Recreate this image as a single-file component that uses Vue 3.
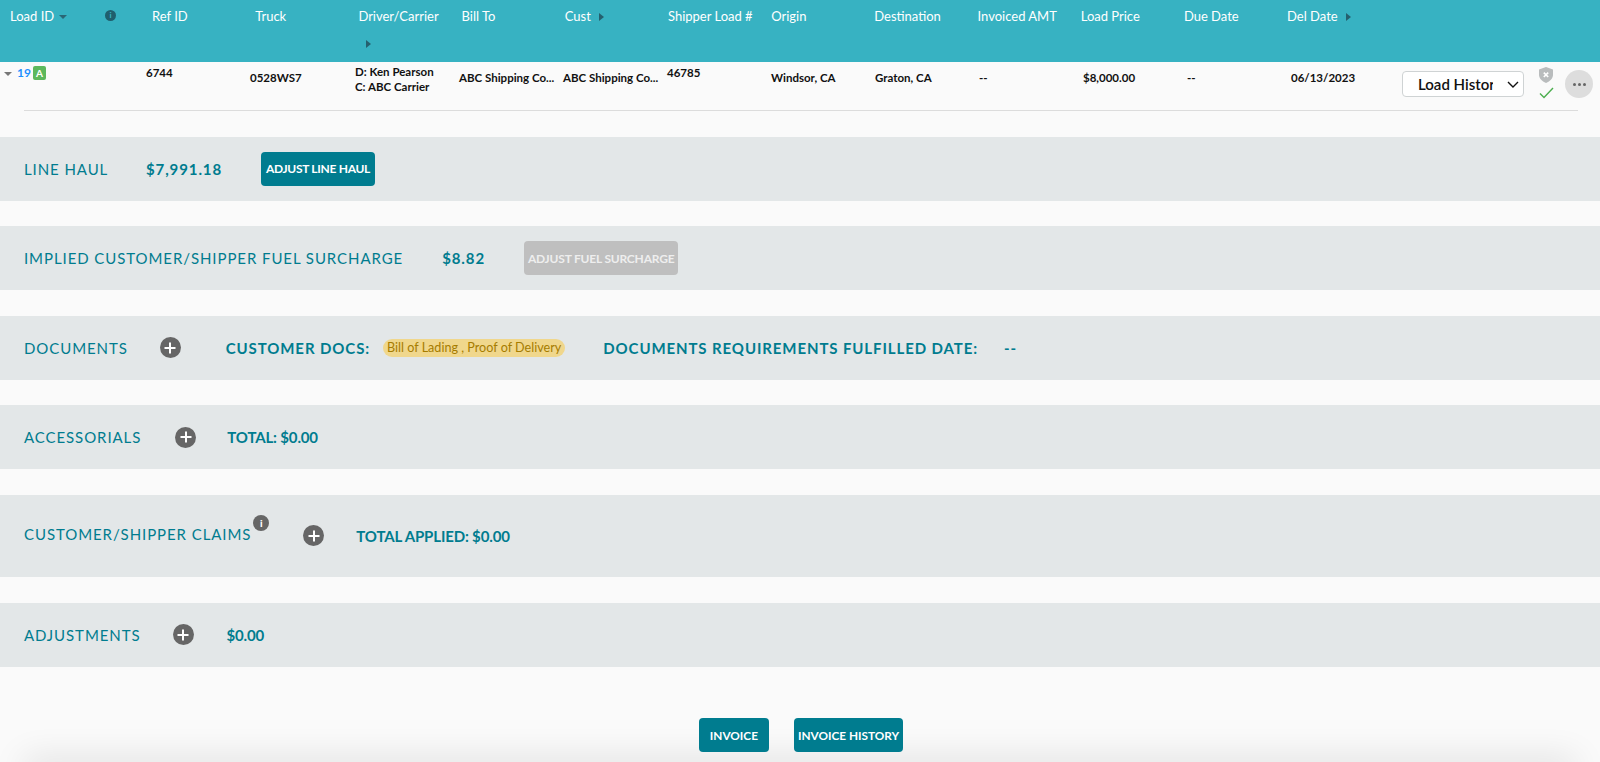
<script setup>
const columns = [
  { label: 'Ref ID' },
  { label: 'Truck' },
  { label: 'Driver/Carrier', arrowBelow: true },
  { label: 'Bill To' },
  { label: 'Cust', arrow: true },
  { label: 'Shipper Load #' },
  { label: 'Origin' },
  { label: 'Destination' },
  { label: 'Invoiced AMT' },
  { label: 'Load Price' },
  { label: 'Due Date' },
  { label: 'Del Date', arrow: true }
]

const plainCells = ['Windsor, CA', 'Graton, CA', '--', '$8,000.00', '--', '06/13/2023']
</script>

<template>
  <div class="page">
    <div class="table-head">
      <div class="th th-load">Load ID <span class="caret-down"></span></div>
      <div class="th th-info"><span class="head-info">i</span></div>
      <div v-for="col in columns" :key="col.label" class="th">
        <span>{{ col.label }}</span>
        <span v-if="col.arrow" class="caret-right"></span>
        <div v-if="col.arrowBelow" class="below"><span class="caret-right"></span></div>
      </div>
    </div>

    <div class="table-row">
      <div class="td td-load">
        <span class="caret-row"></span>
        <a class="load-link">19</a>
        <span class="badge">A</span>
      </div>
      <div class="td td-top">6744</div>
      <div class="td td-truck">0528WS7</div>
      <div class="td td-driver">
        <div>D: Ken Pearson</div>
        <div>C: ABC Carrier</div>
      </div>
      <div class="td">ABC Shipping Co...</div>
      <div class="td">ABC Shipping Co...</div>
      <div class="td td-top">46785</div>
      <div v-for="(cell, i) in plainCells" :key="i" class="td">{{ cell }}</div>
      <div class="select-wrap">
        <select class="history">
          <option>Load History</option>
        </select>
        <svg class="chevron" width="12" height="7" viewBox="0 0 12 7">
          <path d="M1 1l5 5 5-5" fill="none" stroke="#111" stroke-width="1.4" />
        </svg>
      </div>
      <div class="status">
        <svg width="14" height="16" viewBox="0 0 14 16">
          <path d="M7 0l7 2.400v5.400c0 3.600-2.800 6.600-7 8.200-4.200-1.600-7-4.600-7-8.200V2.400z" fill="#b9bcbd" />
          <path d="M4.800 5.600l4.400 4.400M9.200 5.600l-4.400 4.400" stroke="#fff" stroke-width="1.600" />
        </svg>
        <svg width="15" height="12" viewBox="0 0 15 12">
          <path d="M1 6.500l4 4L14 1" fill="none" stroke="#4cae4f" stroke-width="1.400" />
        </svg>
      </div>
      <div class="more"><i></i><i></i><i></i></div>
    </div>
    <div class="divider"></div>

    <section class="band band-first">
      <span class="title title-linehaul">LINE HAUL</span>
      <span class="amount amount-linehaul">$7,991.18</span>
      <button class="btn btn-adjust">ADJUST LINE HAUL</button>
    </section>

    <section class="band">
      <span class="title">IMPLIED CUSTOMER/SHIPPER FUEL SURCHARGE</span>
      <span class="amount amount-fuel">$8.82</span>
      <button class="btn btn-adjust btn-disabled">ADJUST FUEL SURCHARGE</button>
    </section>

    <section class="band">
      <span class="title">DOCUMENTS</span>
      <span class="plus plus-docs"></span>
      <span class="strong strong-docs">CUSTOMER DOCS:</span>
      <span class="pill">Bill of Lading , Proof of Delivery</span>
      <span class="strong strong-req">DOCUMENTS REQUIREMENTS FULFILLED DATE:</span>
      <span class="strong strong-dash">--</span>
    </section>

    <section class="band">
      <span class="title">ACCESSORIALS</span>
      <span class="plus plus-acc"></span>
      <span class="total total-acc">TOTAL: $0.00</span>
    </section>

    <section class="band band-tall">
      <span class="title title-claims">CUSTOMER/SHIPPER CLAIMS<span class="claim-info">i</span></span>
      <span class="plus plus-claims"></span>
      <span class="total total-claims">TOTAL APPLIED: $0.00</span>
    </section>

    <section class="band">
      <span class="title">ADJUSTMENTS</span>
      <span class="plus plus-adj"></span>
      <span class="total total-adj">$0.00</span>
    </section>

    <footer class="actions">
      <button class="btn btn-foot">INVOICE</button>
      <button class="btn btn-foot">INVOICE HISTORY</button>
    </footer>
  </div>
</template>

<style>
html, body {
  margin: 0;
  background: #fafafa;
}
</style>

<style scoped>
.page {
  height: 762px;
  overflow: hidden;
  background: #fafafa;
  font-family: Lato, "Liberation Sans", sans-serif;
  display: flex;
  flex-direction: column;
}

.table-head {
  height: 62px;
  flex: none;
  background: #37b2c2;
  padding: 7px 0 0 10px;
  box-sizing: border-box;
  display: grid;
  grid-template-columns: 95px 47px repeat(12, 103.2px);
  color: #fff;
  font-size: 13px;
  line-height: 18px;
}

.th-load {
  display: flex;
  align-items: center;
  height: 18px;
  gap: 5px;
}

.th-info {
  padding-top: 3px;
}

.head-info {
  display: block;
  width: 11px;
  height: 11px;
  border-radius: 50%;
  background: #1f5f6d;
  color: #37b2c2;
  font-size: 8px;
  font-weight: 900;
  line-height: 11px;
  text-align: center;
}

.caret-down {
  width: 0;
  height: 0;
  border-left: 4px solid transparent;
  border-right: 4px solid transparent;
  border-top: 4px solid #2a6675;
  margin-top: 2px;
}

.caret-right {
  display: inline-block;
  width: 0;
  height: 0;
  border-top: 4px solid transparent;
  border-bottom: 4px solid transparent;
  border-left: 5px solid #25606e;
  margin-left: 8px;
  vertical-align: 0;
}

.below {
  margin-top: 9px;
}

.table-row {
  display: flex;
  height: 48px;
  flex: none;
  margin-left: 4px;
  color: #111;
  font-size: 11.500px;
  font-weight: 700;
  line-height: 15px;
}

.td {
  width: 104px;
  flex: none;
  padding-top: 8px;
  box-sizing: border-box;
  white-space: nowrap;
}

.td-load {
  width: 142px;
  padding-top: 3px;
  display: flex;
  align-items: flex-start;
  gap: 5px;
}

.td-top {
  padding-top: 3px;
}

.td-truck {
  width: 105px;
}

.td-driver {
  padding-top: 2px;
}

.caret-row {
  width: 0;
  height: 0;
  border-left: 4px solid transparent;
  border-right: 4px solid transparent;
  border-top: 4px solid #777;
  margin-top: 7px;
}

.load-link {
  color: #1e90ff;
  font-size: 12px;
}

.badge {
  width: 13px;
  height: 14px;
  margin: 1px 0 0 -3px;
  background: #5cb85c;
  color: #fff;
  border-radius: 2px;
  text-align: center;
  font-size: 10px;
  line-height: 14px;
}

.select-wrap {
  position: relative;
  margin: 9px 0 0 7px;
  width: 122px;
  height: 26px;
  flex: none;
}

.history {
  appearance: none;
  width: 100%;
  height: 100%;
  padding: 0 30px 0 15px;
  border: 1px solid #cfd3d4;
  border-radius: 4px;
  background: #fff;
  color: #111;
  font-family: inherit;
  font-size: 15px;
  font-weight: 600;
}

.chevron {
  position: absolute;
  right: 5px;
  top: 10px;
  pointer-events: none;
}

.status {
  margin: 5px 0 0 14px;
  width: 16px;
  display: flex;
  flex-direction: column;
  align-items: center;
  gap: 4px;
}

.more {
  width: 28px;
  height: 28px;
  margin: 8px 0 0 11px;
  border-radius: 50%;
  background: #dddddd;
  display: flex;
  align-items: center;
  justify-content: center;
  gap: 2px;
  flex: none;
}

.more i {
  width: 3px;
  height: 3px;
  border-radius: 50%;
  background: #666;
}

.divider {
  height: 1px;
  flex: none;
  margin: 0 22px 0 24px;
  background: #dcdcdc;
}

.band {
  height: 64px;
  margin-top: 25.500px;
  padding-left: 24px;
  background: #e3e7e8;
  display: flex;
  align-items: center;
  color: #007c8f;
  flex: none;
}

.band-tall {
  height: 82.500px;
}

.title {
  font-size: 15px;
  letter-spacing: 0.920px;
  position: relative;
}

.title-linehaul {
  width: 122px;
}

.title-claims {
  margin-top: -3px;
}

.amount {
  font-size: 15px;
  font-weight: 700;
  letter-spacing: 0.900px;
}

.amount-linehaul {
  width: 115px;
}

.amount-fuel {
  margin-left: 39px;
  width: 82px;
}

.btn {
  font-family: inherit;
  font-weight: 700;
  color: #fff;
  background: #007c8f;
  border: none;
  border-radius: 4px;
  padding: 0;
}

.btn-adjust {
  height: 34px;
  width: 114px;
  font-size: 12px;
  letter-spacing: -0.300px;
  white-space: nowrap;
}

.btn-disabled {
  width: 154px;
  background: #bfbfbf;
  color: #eeeeee;
  letter-spacing: -0.200px;
}

.plus {
  position: relative;
  width: 21px;
  height: 21px;
  border-radius: 50%;
  background: #666;
  flex: none;
}

.plus::before,
.plus::after {
  content: "";
  position: absolute;
  background: #fff;
  left: 50%;
  top: 50%;
  transform: translate(-50%, -50%);
}

.plus::before {
  width: 11px;
  height: 2px;
}

.plus::after {
  width: 2px;
  height: 11px;
}

.plus-docs {
  margin-left: 32px;
}

.plus-acc {
  margin-left: 34px;
}

.plus-claims {
  margin-left: 52px;
}

.plus-adj {
  margin-left: 32px;
}

.strong {
  font-size: 15px;
  font-weight: 700;
  letter-spacing: 0.900px;
}

.strong-docs {
  margin-left: 45px;
}

.strong-req {
  margin-left: 38px;
}

.strong-dash {
  margin-left: 26px;
}

.pill {
  margin-left: 13px;
  padding: 0 4px;
  height: 18px;
  line-height: 18px;
  border-radius: 9px;
  background: #f0d78c;
  color: #a67c00;
  font-size: 12.600px;
}

.total {
  font-size: 15px;
  font-weight: 700;
  letter-spacing: -0.150px;
}

.total-acc {
  margin-left: 31px;
}

.total-claims {
  margin-left: 32px;
}

.total-adj {
  margin-left: 33px;
}

.claim-info {
  position: absolute;
  right: -18px;
  top: -10px;
  width: 16px;
  height: 16px;
  border-radius: 50%;
  background: #666;
  color: #fff;
  font-size: 10px;
  font-weight: 900;
  line-height: 16px;
  letter-spacing: 0;
  text-align: center;
}

.actions {
  position: relative;
  flex: 1;
  display: flex;
  justify-content: center;
  gap: 25px;
  padding: 51.500px 0 0 2px;
}

.actions::after {
  content: "";
  position: absolute;
  left: 24px;
  right: 24px;
  bottom: -12px;
  height: 12px;
  box-shadow: 0 0 34px rgba(0, 0, 0, 0.2);
}

.btn-foot {
  position: relative;
  z-index: 1;
  height: 34px;
  padding: 0 4px;
  min-width: 70px;
  font-size: 11.800px;
}
</style>
